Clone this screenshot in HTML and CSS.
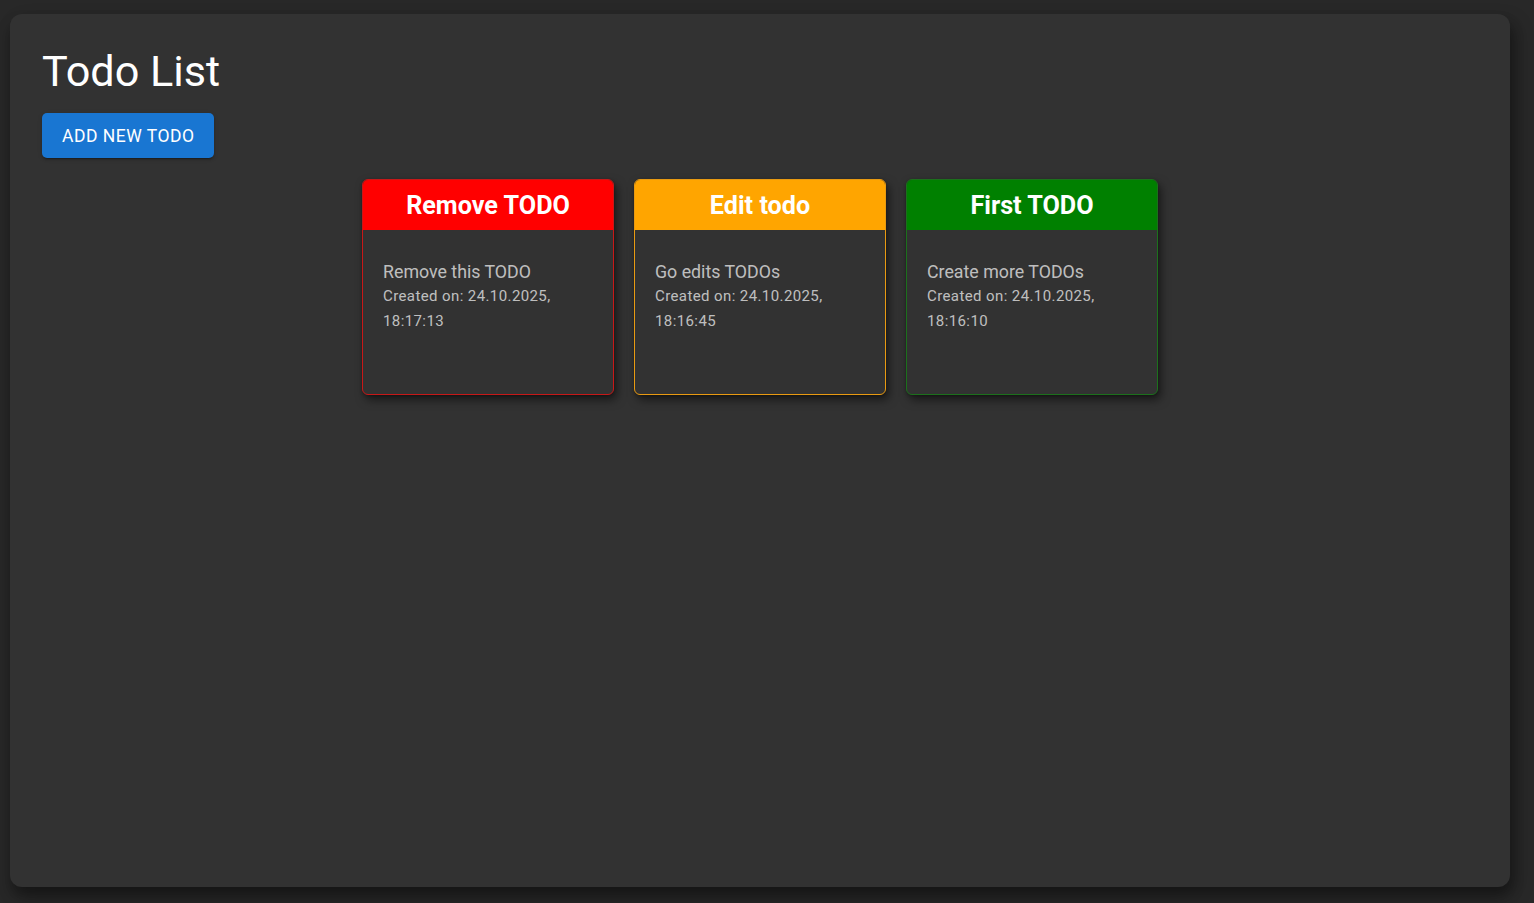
FILE: index.html
```html
<!DOCTYPE html>
<html lang="en">
<head>
<meta charset="utf-8">
<title>Todo List</title>
<link rel="stylesheet" href="styles.css">
</head>
<body>
<main class="panel">
  <h1 class="title">Todo List</h1>
  <button class="add-btn">ADD NEW TODO</button>
  <section class="cards">
    <article class="card card-red">
      <header class="card-head">Remove TODO</header>
      <div class="card-body">
        <p class="card-text">Remove this TODO</p>
        <p class="card-date">Created on: 24.10.2025, 18:17:13</p>
      </div>
    </article>
    <article class="card card-orange">
      <header class="card-head">Edit todo</header>
      <div class="card-body">
        <p class="card-text">Go edits TODOs</p>
        <p class="card-date">Created on: 24.10.2025, 18:16:45</p>
      </div>
    </article>
    <article class="card card-green">
      <header class="card-head">First TODO</header>
      <div class="card-body">
        <p class="card-text">Create more TODOs</p>
        <p class="card-date">Created on: 24.10.2025, 18:16:10</p>
      </div>
    </article>
  </section>
</main>
</body>
</html>
```
FILE: styles.css
```css
html, body {
  margin: 0;
  height: 100%;
}
body {
  background: #282828;
  font-family: Roboto, "Liberation Sans", Arial, sans-serif;
  padding: 14px 0 0 10px;
  box-sizing: border-box;
  overflow: hidden;
}
.panel {
  width: 1500px;
  height: 873px;
  box-sizing: border-box;
  background: #323232;
  border-radius: 12px;
  padding: 32px;
  box-shadow: 0 10px 14px rgba(0,0,0,0.25), 6px 8px 18px rgba(0,0,0,0.3);
}
.title {
  margin: 0 0 15px 0;
  font-size: 43.2px;
  font-weight: 400;
  line-height: 52px;
  color: #ffffff;
}
.add-btn {
  display: block;
  font-family: inherit;
  font-size: 17.5px;
  font-weight: 400;
  letter-spacing: 0.5px;
  line-height: 31px;
  color: #ffffff;
  background: #1976d2;
  border: none;
  border-radius: 5px;
  padding: 8px 20px 6px 20px;
  box-shadow: 0 3px 1px -2px rgba(0,0,0,0.2), 0 2px 2px rgba(0,0,0,0.14), 0 1px 5px rgba(0,0,0,0.12);
  margin: 0 0 21px 0;
}
.cards {
  display: flex;
  justify-content: center;
  gap: 20px;
}
.card {
  width: 252px;
  height: 216px;
  box-sizing: border-box;
  border: 1px solid;
  border-radius: 6px;
  overflow: hidden;
  background: #323232;
  box-shadow: 3px 5px 10px rgba(0,0,0,0.5), 0 1px 3px rgba(0,0,0,0.25);
}
.card-red { border-color: #c81818; }
.card-red .card-head { background: #ff0000; }
.card-orange { border-color: #e89a12; }
.card-orange .card-head { background: #ffa500; }
.card-green { border-color: #1c701c; }
.card-green .card-head { background: #008000; }
.card-head {
  height: 51px;
  box-sizing: border-box;
  padding-top: 2px;
  margin: -1px -1px 0 -1px;
  display: flex;
  align-items: center;
  justify-content: center;
  color: #ffffff;
  font-size: 25.2px;
  font-weight: 700;
}
.card-body {
  padding: 30px 20px 20px 20px;
  color: rgba(255,255,255,0.7);
}
.card-text {
  margin: 0;
  font-size: 17.8px;
  line-height: 24px;
}
.card-date {
  margin: 0;
  font-size: 15px;
  line-height: 25px;
  letter-spacing: 0.4px;
  padding-right: 40px;
}
```
